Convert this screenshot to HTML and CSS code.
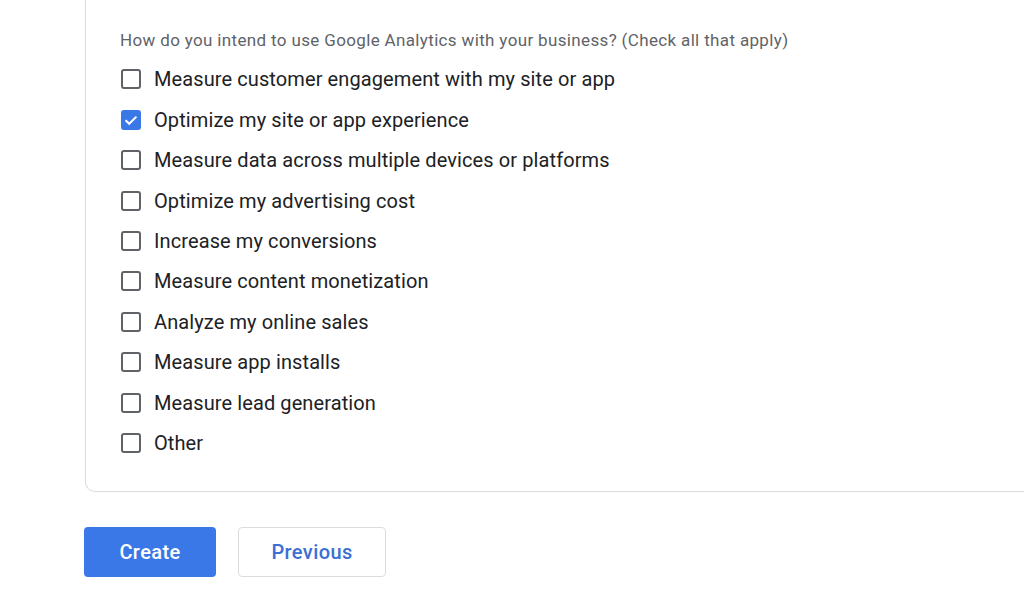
FILE: index.html
```html
<!DOCTYPE html>
<html>
<head>
<meta charset="utf-8">
<link rel="stylesheet" href="styles.css">
</head>
<body>
<div class="page">
  <div class="card">
    <div class="question">How do you intend to use Google Analytics with your business? (Check all that apply)</div>
    <ul class="options">
      <li class="option"><span class="box"></span><span class="label">Measure customer engagement with my site or app</span></li>
      <li class="option"><span class="box checked"><svg viewBox="0 0 20 20" width="20" height="20"><path d="M4.6 10.2 L8.2 13.8 L15.4 6.6" fill="none" stroke="#fff" stroke-width="2"/></svg></span><span class="label">Optimize my site or app experience</span></li>
      <li class="option"><span class="box"></span><span class="label">Measure data across multiple devices or platforms</span></li>
      <li class="option"><span class="box"></span><span class="label">Optimize my advertising cost</span></li>
      <li class="option"><span class="box"></span><span class="label">Increase my conversions</span></li>
      <li class="option"><span class="box"></span><span class="label">Measure content monetization</span></li>
      <li class="option"><span class="box"></span><span class="label">Analyze my online sales</span></li>
      <li class="option"><span class="box"></span><span class="label">Measure app installs</span></li>
      <li class="option"><span class="box"></span><span class="label">Measure lead generation</span></li>
      <li class="option"><span class="box"></span><span class="label">Other</span></li>
    </ul>
  </div>
  <div class="actions">
    <button class="btn primary">Create</button>
    <button class="btn secondary">Previous</button>
  </div>
</div>
</body>
</html>
```
FILE: styles.css
```css
html, body {
  margin: 0;
  padding: 0;
  background: #fff;
  overflow: hidden;
  width: 1024px;
  height: 605px;
}
body {
  font-family: Roboto, "Liberation Sans", Arial, sans-serif;
  color: #202124;
}
.page {
  padding-left: 85px;
  overflow: hidden;
}
.card {
  border: 1px solid #dadce0;
  border-top: none;
  border-radius: 0 0 10px 10px;
  width: 1000px;
  box-sizing: border-box;
  padding: 28px 0 28px 35px;
}
.question {
  font-size: 17px;
  line-height: 24px;
  color: #5f6368;
  margin-left: -1px;
  letter-spacing: 0.35px;
}
.options {
  list-style: none;
  margin: 7px 0 0 0;
  padding: 0;
}
.option {
  display: flex;
  align-items: center;
  height: 40.45px;
}
.box {
  width: 20px;
  height: 20px;
  box-sizing: border-box;
  border: 2px solid #5f6368;
  border-radius: 3px;
  flex: none;
  display: flex;
  align-items: center;
  justify-content: center;
}
.box.checked {
  background: #3b78e7;
  border-color: #3b78e7;
}
.box.checked svg {
  flex: none;
}
.label {
  margin-left: 13px;
  font-size: 20px;
  letter-spacing: 0.1px;
}
.actions {
  display: flex;
  gap: 22px;
  margin-top: 35px;
  margin-left: -1px;
}
.btn {
  height: 50px;
  border-radius: 4px;
  font-family: Roboto, "Liberation Sans", Arial, sans-serif;
  font-size: 20px;
  font-weight: 500;
  letter-spacing: 0.4px;
  cursor: pointer;
  box-sizing: border-box;
}
.btn.primary {
  width: 132px;
  background: #3b78e7;
  border: none;
  color: #fff;
}
.btn.secondary {
  width: 148px;
  background: #fff;
  border: 1px solid #dadce0;
  color: #3b6fd4;
}
```
